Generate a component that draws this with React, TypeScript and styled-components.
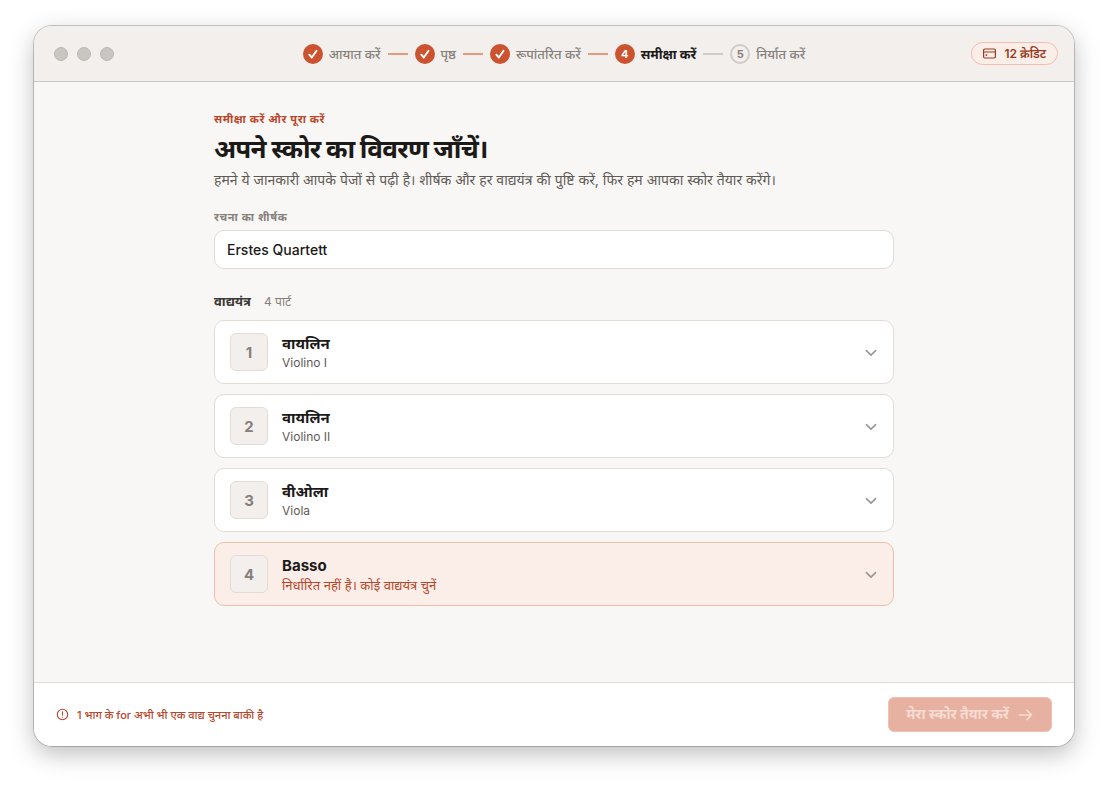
import React, { useState } from "react";
import styled, { createGlobalStyle } from "styled-components";

const GlobalStyle = createGlobalStyle`
  *, *::before, *::after { box-sizing: border-box; }
  body {
    margin: 0;
    background: #fff;
    color: #1c1a19;
    font-family: Inter, "Noto Sans Devanagari", "Noto Sans", sans-serif;
    -webkit-font-smoothing: antialiased;
  }
  button, input { font: inherit; color: inherit; }
`;

const Desktop = styled.div`
  display: flex;
  min-height: 100vh;
  padding: 26px 34px 42px;
`;

const Window = styled.div`
  flex: 1;
  display: flex;
  flex-direction: column;
  min-width: 0;
  overflow: hidden;
  border-radius: 18px;
  background: #f8f7f5;
  box-shadow: 0 0 0 1px rgba(0, 0, 0, 0.2), 0 8px 24px rgba(0, 0, 0, 0.26);
`;

const TitleBar = styled.header`
  display: grid;
  grid-template-columns: 1fr auto 1fr;
  align-items: center;
  height: 56px;
  padding: 0 16px;
  background: #f3efec;
  border-bottom: 1px solid #c8c8c4;
`;

const Lights = styled.div`
  display: flex;
  gap: 9px;
  padding-left: 4px;
`;

const Light = styled.span`
  width: 14px;
  height: 14px;
  border: 1px solid #bcb8b4;
  border-radius: 50%;
  background: #c9c5c1;
`;

const Steps = styled.ol`
  display: flex;
  align-items: center;
  gap: 7px;
  margin: 0;
  padding: 0;
  list-style: none;
`;

type StepState = "done" | "current" | "next";

const Step = styled.li<{ $state: StepState }>`
  display: flex;
  align-items: center;
  gap: 6px;
  font-size: 13px;
  line-height: 20px;
  white-space: nowrap;
  font-weight: ${(p) => (p.$state === "current" ? 700 : 500)};
  color: ${(p) => (p.$state === "current" ? "#1c1a19" : "#85807b")};

  &:not(:last-child)::after {
    content: "";
    width: 20px;
    height: 2px;
    margin-left: 1px;
    background: ${(p) => (p.$state === "done" ? "#e59a7c" : "#d0ccc5")};
  }
`;

const StepMark = styled.span<{ $state: StepState }>`
  display: grid;
  place-items: center;
  width: 20px;
  height: 20px;
  border-radius: 50%;
  font-size: 11px;
  font-weight: 700;
  line-height: 16px;
  border: 2px solid ${(p) => (p.$state === "next" ? "#d0ccc5" : "#cb532f")};
  background: ${(p) => (p.$state === "next" ? "transparent" : "#cb532f")};
  color: ${(p) => (p.$state === "next" ? "#85807b" : "#fff")};
`;

const Credits = styled.button`
  justify-self: end;
  display: flex;
  align-items: center;
  gap: 8px;
  height: 23px;
  padding: 0 11px;
  border: 1px solid #f0bfae;
  border-radius: 12px;
  background: #fbeee8;
  color: #963a20;
  font-size: 12px;
  font-weight: 600;
  line-height: 20px;
`;

const Content = styled.main`
  flex: 1;
  width: 100%;
  max-width: 728px;
  margin: 0 auto;
  padding: 28px 24px;
`;

const Eyebrow = styled.p`
  margin: 0;
  color: #b8462a;
  font-size: 11px;
  font-weight: 700;
  line-height: 18px;
  letter-spacing: 0.06em;
`;

const Title = styled.h1`
  margin: 0;
  font-size: 26px;
  font-weight: 700;
  line-height: 42px;
  letter-spacing: -0.03em;
`;

const Intro = styled.p`
  margin: 0;
  color: #5f5a56;
  font-size: 14px;
  line-height: 20px;
`;

const Label = styled.label`
  display: block;
  margin: 18px 0 4px;
  color: #85807b;
  font-size: 11px;
  font-weight: 700;
  line-height: 18px;
  letter-spacing: 0.06em;
`;

const TextBox = styled.input`
  display: block;
  width: 100%;
  height: 39px;
  padding: 0 12px;
  border: 1px solid #e1dbd6;
  border-radius: 10px;
  background: #fff;
  font-size: 14px;
  font-weight: 500;
`;

const SectionHead = styled.div`
  display: flex;
  align-items: baseline;
  gap: 13px;
  margin: 22px 0 8px;
  font-size: 12px;
  line-height: 20px;
`;

const SectionTitle = styled.h2`
  margin: 0;
  color: #3b3734;
  font-size: 13px;
  font-weight: 700;
`;

const Count = styled.span`
  color: #85807b;
`;

const Parts = styled.div`
  display: grid;
  gap: 10px;
`;

const Part = styled.button<{ $missing: boolean }>`
  display: flex;
  align-items: center;
  gap: 14px;
  width: 100%;
  height: 64px;
  padding: 0 15px;
  border: 1px solid ${(p) => (p.$missing ? "#f0bfa9" : "#e1dcd6")};
  border-radius: 10px;
  background: ${(p) => (p.$missing ? "#fbeee9" : "#fff")};
  text-align: left;
`;

const PartNumber = styled.span`
  display: grid;
  place-items: center;
  width: 38px;
  height: 38px;
  border: 1px solid #e1dcd6;
  border-radius: 6px;
  background: #f3efec;
  color: #85807b;
  font-size: 15px;
  font-weight: 700;
`;

const PartText = styled.span`
  flex: 1;
  display: grid;
  padding-top: 2px;
`;

const PartName = styled.span`
  font-size: 15px;
  font-weight: 700;
  line-height: 20px;
`;

const PartDetail = styled.span<{ $missing: boolean }>`
  color: ${(p) => (p.$missing ? "#b8462a" : "#5f5a56")};
  font-size: ${(p) => (p.$missing ? 13 : 12)}px;
  line-height: 18px;
`;

const Footer = styled.footer`
  display: flex;
  align-items: center;
  justify-content: space-between;
  height: 64px;
  padding: 0 22px;
  border-top: 1px solid #e1dbd6;
  background: #fff;
`;

const Notice = styled.p`
  display: flex;
  align-items: center;
  gap: 8px;
  margin: 0;
  color: #b8462a;
  font-size: 11px;
  font-weight: 500;
  line-height: 18px;
`;

const Submit = styled.button`
  display: flex;
  align-items: center;
  gap: 9px;
  height: 35px;
  padding: 0 18px 0 17px;
  border: 1px solid #f3bfae;
  border-radius: 6px;
  background: #e7b1a1;
  color: #f6dcd3;
  font-size: 14px;
  font-weight: 700;
`;

const Icon = styled.svg`
  display: block;
  flex: none;
  fill: none;
  stroke: currentColor;
  stroke-linecap: round;
  stroke-linejoin: round;
`;

const CheckIcon = () => (
  <Icon width="12" height="12" viewBox="0 0 12 12" strokeWidth="1.9" aria-hidden="true">
    <path d="M2.3 6.7 4.8 9.5 9.5 2.7" />
  </Icon>
);

const CardIcon = () => (
  <Icon width="13" height="11" viewBox="0 0 13 11" strokeWidth="1.2" aria-hidden="true">
    <rect x="0.6" y="1" width="11.8" height="9" rx="1.2" />
    <path d="M0.6 4h11.8" />
    <path d="M3.2 7.1h.3" strokeWidth="1.6" />
  </Icon>
);

const ChevronIcon = () => (
  <Icon width="14" height="14" viewBox="0 0 14 14" strokeWidth="1.5" color="#98948f" aria-hidden="true">
    <path d="M2.4 5.6 7 10.1l4.6-4.5" />
  </Icon>
);

const AlertIcon = () => (
  <Icon width="13" height="13" viewBox="0 0 13 13" strokeWidth="1.1" aria-hidden="true">
    <circle cx="6.5" cy="6.5" r="5.2" />
    <path d="M6.5 3.8v3.2M6.5 9v.1" />
  </Icon>
);

const ArrowIcon = () => (
  <Icon width="15" height="14" viewBox="0 0 15 14" strokeWidth="1.5" aria-hidden="true">
    <path d="M1.5 7h12M9 2.4 13.6 7 9 11.6" />
  </Icon>
);

const steps: { label: string; state: StepState }[] = [
  { label: "आयात करें", state: "done" },
  { label: "पृष्ठ", state: "done" },
  { label: "रूपांतरित करें", state: "done" },
  { label: "समीक्षा करें", state: "current" },
  { label: "निर्यात करें", state: "next" },
];

const parts = [
  { name: "वायलिन", detail: "Violino I", missing: false },
  { name: "वायलिन", detail: "Violino II", missing: false },
  { name: "वीओला", detail: "Viola", missing: false },
  { name: "Basso", detail: "निर्धारित नहीं है। कोई वाद्ययंत्र चुनें", missing: true },
];

export default function App() {
  const [title, setTitle] = useState("Erstes Quartett");

  return (
    <>
      <GlobalStyle />
      <Desktop>
        <Window>
          <TitleBar>
            <Lights>
              <Light />
              <Light />
              <Light />
            </Lights>
            <Steps>
              {steps.map((step, i) => (
                <Step key={step.label} $state={step.state}>
                  <StepMark $state={step.state}>
                    {step.state === "done" ? <CheckIcon /> : i + 1}
                  </StepMark>
                  {step.label}
                </Step>
              ))}
            </Steps>
            <Credits type="button">
              <CardIcon />
              12 क्रेडिट
            </Credits>
          </TitleBar>
          <Content>
            <Eyebrow>समीक्षा करें और पूरा करें</Eyebrow>
            <Title>अपने स्कोर का विवरण जाँचें।</Title>
            <Intro>
              हमने ये जानकारी आपके पेजों से पढ़ी है। शीर्षक और हर वाद्ययंत्र की पुष्टि करें, फिर हम आपका स्कोर तैयार करेंगे।
            </Intro>
            <Label htmlFor="piece-title">रचना का शीर्षक</Label>
            <TextBox id="piece-title" value={title} onChange={(e) => setTitle(e.target.value)} />
            <SectionHead>
              <SectionTitle>वाद्ययंत्र</SectionTitle>
              <Count>4 पार्ट</Count>
            </SectionHead>
            <Parts>
              {parts.map((part, i) => (
                <Part key={part.detail} type="button" $missing={part.missing}>
                  <PartNumber>{i + 1}</PartNumber>
                  <PartText>
                    <PartName>{part.name}</PartName>
                    <PartDetail $missing={part.missing}>{part.detail}</PartDetail>
                  </PartText>
                  <ChevronIcon />
                </Part>
              ))}
            </Parts>
          </Content>
          <Footer>
            <Notice>
              <AlertIcon />
              1 भाग के for अभी भी एक वाद्य चुनना बाकी है
            </Notice>
            <Submit type="button" disabled>
              मेरा स्कोर तैयार करें
              <ArrowIcon />
            </Submit>
          </Footer>
        </Window>
      </Desktop>
    </>
  );
}
